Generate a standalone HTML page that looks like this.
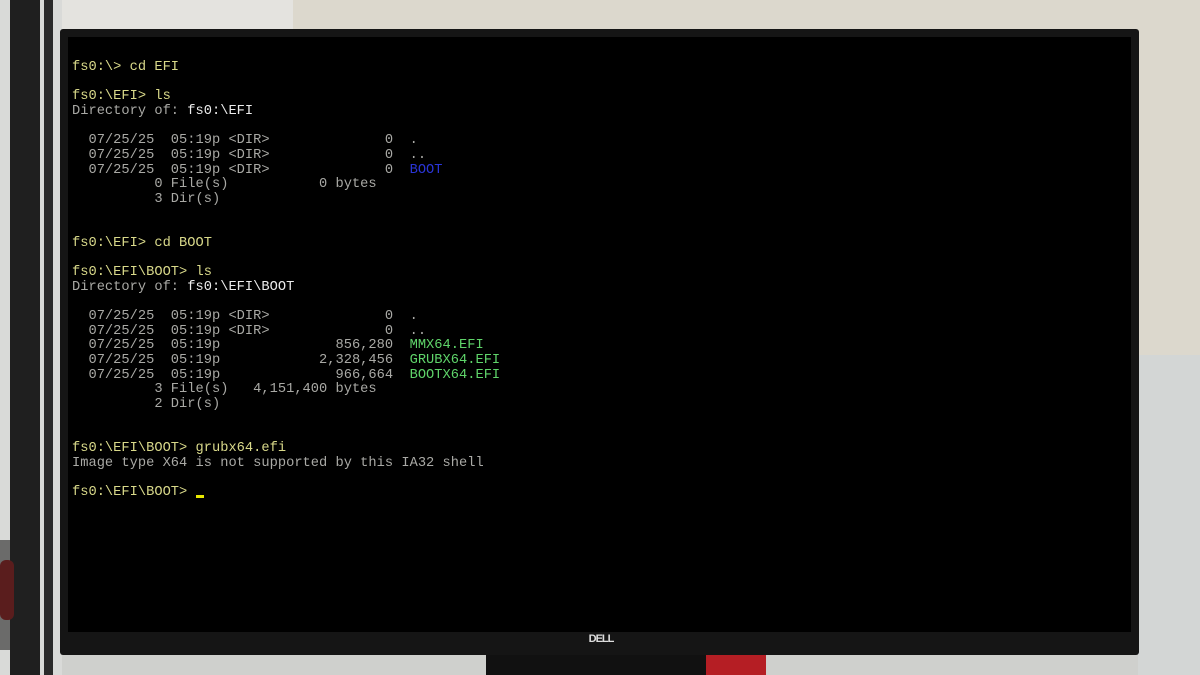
<!DOCTYPE html>
<html><head><meta charset="utf-8"><style>
html,body{margin:0;padding:0;width:1200px;height:675px;overflow:hidden;background:#cfd0cd;position:relative}
div{position:absolute}
pre{position:absolute;left:72px;top:61px;margin:0;font-family:"Liberation Mono",monospace;font-size:13.7px;line-height:14.65px;color:#a9a9a5;letter-spacing:0.02px}
.y{color:#d9d98a}.w{color:#ececec}.b{color:#2a35d8}.g{color:#5fd46a}
</style></head><body>
<div style="left:0;top:0;width:300px;height:40px;background:#e4e3df"></div>
<div style="left:293px;top:0;width:907px;height:355px;background:#dcd8cd"></div>
<div style="left:1138px;top:355px;width:62px;height:320px;background:#d3d6d5"></div>
<div style="left:0;top:0;width:62px;height:675px;background:#d9dad8"></div>
<div style="left:10px;top:0;width:30px;height:675px;background:#1f1f1f"></div>
<div style="left:44px;top:0;width:9px;height:675px;background:#2a2a2a"></div>
<div style="left:0;top:560px;width:14px;height:60px;background:#b01818;border-radius:6px"></div>
<div style="left:0;top:540px;width:30px;height:110px;background:#222;opacity:.6"></div>
<div style="left:60px;top:29px;width:1079px;height:626px;background:#151515;border-radius:3px"></div>
<div style="left:68px;top:37px;width:1063px;height:595px;background:#000"></div>
<div style="left:486px;top:655px;width:220px;height:20px;background:#111"></div>
<div style="left:706px;top:655px;width:60px;height:20px;background:#b51e24"></div>
<div style="left:586px;top:633px;width:30px;height:14px;color:#ddd;font:bold 11px 'Liberation Sans',sans-serif;text-align:center;letter-spacing:-1px">DELL</div>
<pre><span class="y">fs0:\&gt; cd EFI</span>

<span class="y">fs0:\EFI&gt; ls</span>
Directory of: <span class="w">fs0:\EFI</span>

  07/25/25  05:19p &lt;DIR&gt;              0  .
  07/25/25  05:19p &lt;DIR&gt;              0  ..
  07/25/25  05:19p &lt;DIR&gt;              0  <span class="b">BOOT</span>
          0 File(s)           0 bytes
          3 Dir(s)


<span class="y">fs0:\EFI&gt; cd BOOT</span>

<span class="y">fs0:\EFI\BOOT&gt; ls</span>
Directory of: <span class="w">fs0:\EFI\BOOT</span>

  07/25/25  05:19p &lt;DIR&gt;              0  .
  07/25/25  05:19p &lt;DIR&gt;              0  ..
  07/25/25  05:19p              856,280  <span class="g">MMX64.EFI</span>
  07/25/25  05:19p            2,328,456  <span class="g">GRUBX64.EFI</span>
  07/25/25  05:19p              966,664  <span class="g">BOOTX64.EFI</span>
          3 File(s)   4,151,400 bytes
          2 Dir(s)


<span class="y">fs0:\EFI\BOOT&gt; grubx64.efi</span>
Image type X64 is not supported by this IA32 shell

<span class="y">fs0:\EFI\BOOT&gt; </span></pre>
<div style="left:196px;top:495px;width:8px;height:3px;background:#e8e800"></div>
</body></html>
